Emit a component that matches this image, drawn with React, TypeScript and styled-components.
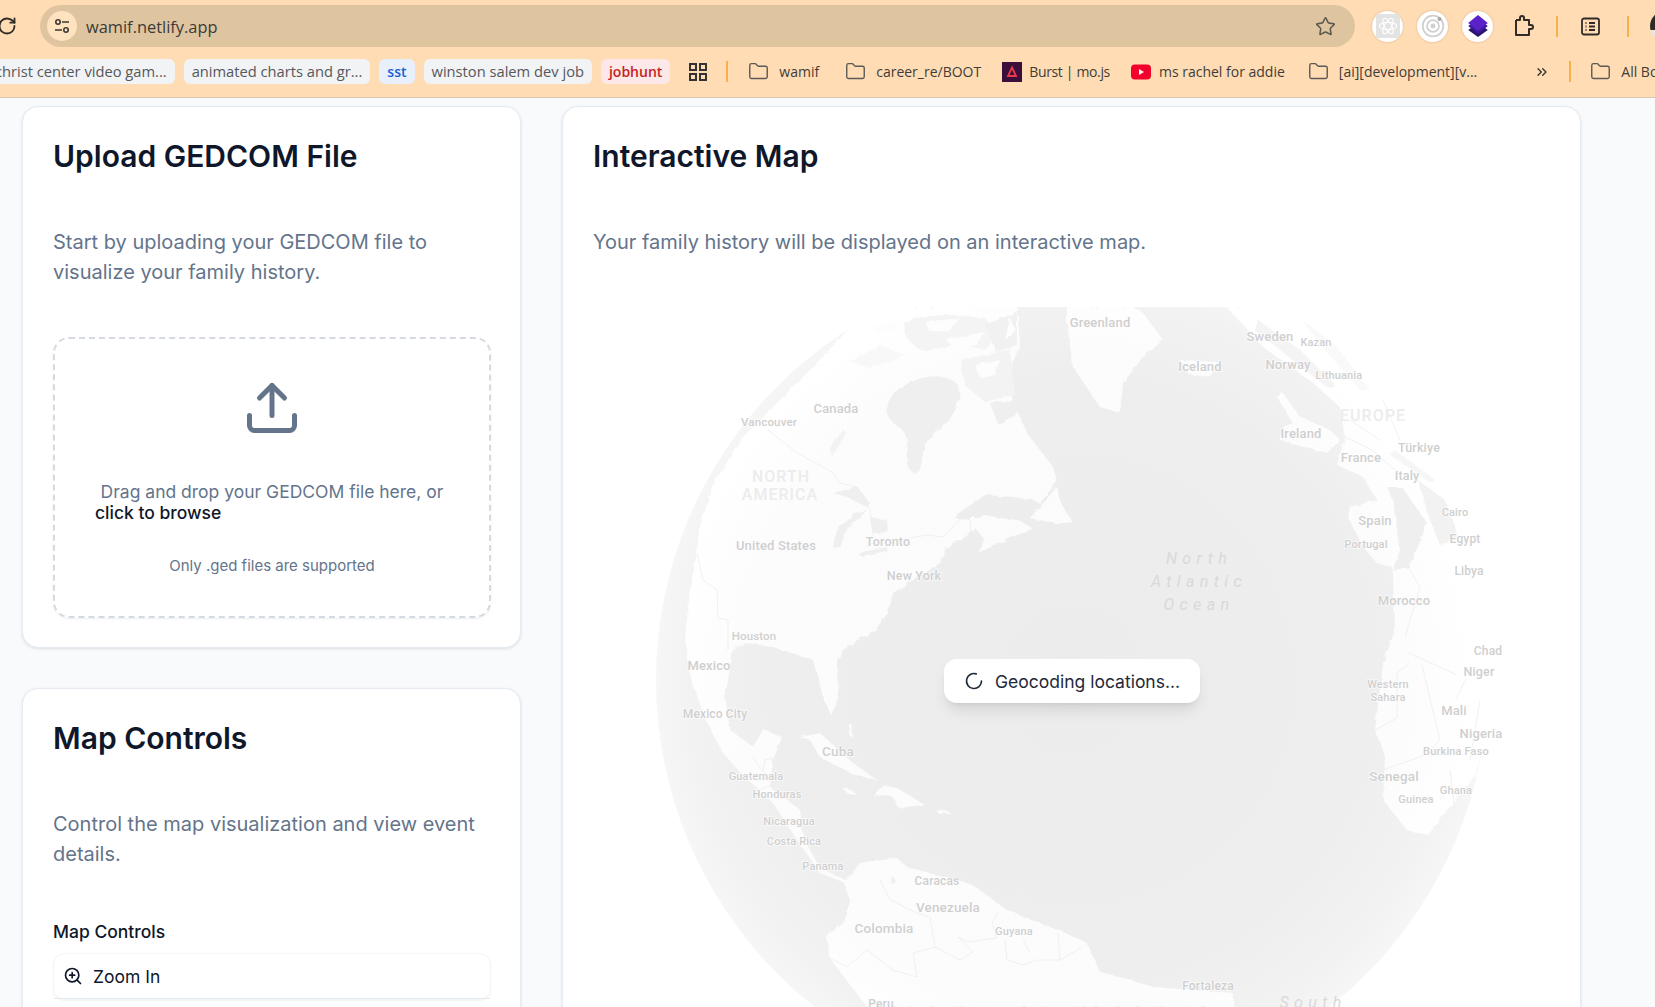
import React from "react";
import styled, { createGlobalStyle } from "styled-components";
import { Upload, ZoomIn, LoaderCircle, Star, RotateCw, Folder, ChevronsRight } from "lucide-react";

const Global = createGlobalStyle`
  html, body { margin: 0; height: 100%; overflow: hidden; background: #f8fafc; }
  body { font-family: Inter, "Liberation Sans", sans-serif; }
  * { box-sizing: border-box; }
`;

const Shell = styled.div`
  width: 1655px;
  height: 1007px;
  overflow: hidden;
  display: flex;
  flex-direction: column;
`;

const Chrome = styled.header`
  height: 98px;
  flex: none;
  background: #ffdcb4;
  border-bottom: 1px solid #d9c6ae;
  font-family: "Open Sans", "Noto Sans", sans-serif;
  overflow: hidden;
`;

const TopRow = styled.div`
  height: 42px;
  margin-top: 5px;
  display: flex;
  align-items: center;
  color: #3a3a3a;
  white-space: nowrap;
`;

const Reload = styled.div`
  width: 40px;
  margin-left: -3px;
  margin-right: 3px;
  flex: none;
  display: flex;
  color: #2f2c28;
`;

const Omnibox = styled.div`
  width: 1315px;
  height: 42px;
  flex: none;
  background: #dec5a0;
  border-radius: 21px;
  display: flex;
  align-items: center;
  padding: 0 19px 0 7px;
`;

const TuneBadge = styled.div`
  width: 30px;
  height: 30px;
  border-radius: 50%;
  background: #ffe3bf;
  display: flex;
  align-items: center;
  justify-content: center;
  flex: none;
`;

const Url = styled.span`
  margin-left: 9px;
  font-size: 16.4px;
  color: #3c3a36;
  flex: 1;
`;

const ExtGroup = styled.div`
  display: flex;
  align-items: center;
  gap: 14px;
  margin-left: 17px;
`;

const ExtCircle = styled.div`
  width: 31px;
  height: 31px;
  border-radius: 50%;
  background: #fff;
  box-shadow: 0 0 2px rgba(120, 90, 50, 0.35);
  display: flex;
  align-items: center;
  justify-content: center;
`;

const ToolIcon = styled.div<{ $ml: number }>`
  margin-left: ${(p) => p.$ml}px;
  display: flex;
  flex: none;
`;

const OrangeBar = styled.span<{ $ml: number; $h?: number }>`
  width: 2px;
  height: ${(p) => p.$h ?? 21}px;
  background: #f8b048;
  margin-left: ${(p) => p.$ml}px;
  flex: none;
`;

const Avatar = styled.div`
  width: 30px;
  height: 30px;
  border-radius: 50%;
  margin-left: 21px;
  flex: none;
  background: linear-gradient(#2f2a28 62%, #e9e6e2 62%);
`;

const BookmarkRow = styled.div`
  height: 25px;
  margin-top: 12px;
  display: flex;
  align-items: center;
  white-space: nowrap;
  font-size: 14px;
  color: #3f3c38;
`;

const Chip = styled.span<{ $tone?: "blue" | "red"; $ml?: number }>`
  height: 25px;
  flex: none;
  display: flex;
  align-items: center;
  padding: 0 8px ${(p) => (p.$tone ? 0 : 2)}px;
  border-radius: 6px;
  margin-left: ${(p) => p.$ml ?? 9}px;
  font-size: ${(p) => (p.$tone ? 14 : 14.7)}px;
  background: ${(p) => (p.$tone === "blue" ? "#e8f0fe" : p.$tone === "red" ? "#fce8e8" : "#f2f3f5")};
  color: ${(p) => (p.$tone === "blue" ? "#1a62d0" : p.$tone === "red" ? "#c5221f" : "#55585c")};
  font-weight: ${(p) => (p.$tone ? 600 : 400)};
`;

const Mark = styled.span<{ $ml: number; $gap: number; $tight?: boolean }>`
  display: flex;
  align-items: center;
  gap: ${(p) => p.$gap}px;
  flex: none;
  margin-left: ${(p) => p.$ml}px;
  letter-spacing: ${(p) => (p.$tight ? "-0.35px" : "normal")};
`;

const GridIcon = styled.span<{ $ml: number }>`
  margin-left: ${(p) => p.$ml}px;
  display: flex;
  flex: none;
`;

const Main = styled.main`
  flex: 1;
  min-height: 0;
  overflow: hidden;
  display: grid;
  grid-template-columns: 499px 1019px;
  column-gap: 41px;
  align-items: start;
  padding: 8px 0 0 22px;
`;

const Column = styled.div`
  display: flex;
  flex-direction: column;
  gap: 40px;
`;

const Card = styled.section`
  background: #fff;
  border: 1px solid #e6ebf1;
  border-radius: 16px;
  box-shadow: 0 1px 3px rgba(30, 41, 59, 0.12);
  padding: 31px 29px 29px 30px;
`;

const Title = styled.h2`
  margin: 0;
  font-size: 30px;
  line-height: 36px;
  font-weight: 600;
  color: #0f172a;
`;

const Description = styled.p`
  margin: 53px 0 0;
  font-size: 20px;
  line-height: 30px;
  color: #64748b;
`;

const Dropzone = styled.div`
  margin-top: 50px;
  height: 281px;
  border: 2px dashed #d5dae2;
  border-radius: 16px;
  box-shadow: 0 1px 2px rgba(30, 41, 59, 0.08);
  padding-top: 39px;
  display: flex;
  flex-direction: column;
  align-items: center;
  color: #64748b;
`;

const DropText = styled.p`
  width: 354px;
  margin: 43px 0 0;
  font-size: 17.5px;
  line-height: 21px;
  text-align: center;
`;

const Browse = styled.span`
  display: block;
  text-align: left;
  color: #0f172a;
  font-weight: 500;
`;

const DropHint = styled.p`
  margin: 33px 0 0;
  font-size: 15px;
  line-height: 20px;
`;

const SectionLabel = styled.h3`
  margin: 49px 0 0;
  font-size: 17.5px;
  line-height: 28px;
  font-weight: 500;
  color: #0f172a;
`;

const Menu = styled.div`
  margin-top: 7px;
  border: 1px solid #f4f6f9;
  border-radius: 12px;
  box-shadow: 0 1px 2px rgba(30, 41, 59, 0.06);
`;

const MenuRow = styled.div`
  height: 45px;
  display: flex;
  align-items: center;
  gap: 10px;
  padding-left: 9px;
  font-size: 17.5px;
  color: #0f172a;
  border-bottom: 1px solid #e2e8f0;
`;

const MapFrame = styled.div`
  position: relative;
  margin-top: 50px;
  height: 748px;
`;

const MapArt = styled.svg`
  display: block;
  width: 958px;
  height: 748px;
`;

const LandPath = styled.path<{ $fill?: string }>`
  fill: ${(p) => p.$fill ?? "url(#landFade)"};
`;

const SeaPath = styled.path<{ $fill?: string }>`
  fill: ${(p) => p.$fill ?? "#efefef"};
`;

const BorderPath = styled.path`
  fill: none;
  stroke: #ebebeb;
  stroke-width: 0.7;
`;

const MapLabel = styled.text<{ $size: number; $kind?: "soft" | "sea" }>`
  font-family: Roboto, "Open Sans", sans-serif;
  font-size: ${(p) => p.$size}px;
  font-weight: ${(p) => (p.$kind === "sea" ? 400 : 500)};
  font-style: ${(p) => (p.$kind === "sea" ? "italic" : "normal")};
  letter-spacing: ${(p) => (p.$kind === "sea" ? "5.4px" : p.$kind === "soft" ? "1px" : "0.15px")};
  fill: ${(p) => (p.$kind === "soft" ? "#ececec" : p.$kind === "sea" ? "#d9d9d9" : "#cfcfcf")};
  stroke: rgba(255, 255, 255, 0.75);
  stroke-width: ${(p) => (p.$kind ? 0 : 1.6)}px;
  paint-order: stroke;
  text-anchor: middle;
  dominant-baseline: central;
`;

const StatusLayer = styled.div`
  position: absolute;
  inset: 0;
  display: flex;
  align-items: center;
  justify-content: center;
`;

const StatusPill = styled.div`
  width: 256px;
  height: 44px;
  background: #fff;
  border-radius: 13px;
  box-shadow: 0 10px 15px -3px rgba(0, 0, 0, 0.1), 0 4px 6px -4px rgba(0, 0, 0, 0.1);
  display: flex;
  align-items: center;
  gap: 11px;
  padding-left: 20px;
  font-size: 17.5px;
  color: #1e293b;
`;

const labels: [string, number, number, number, ("soft" | "sea")?][] = [
  ["Greenland", 1100, 322, 13],
  ["Canada", 836, 408, 13],
  ["Vancouver", 769, 422, 11.5],
  ["NORTH", 781, 476, 16, "soft"],
  ["AMERICA", 780, 494, 16, "soft"],
  ["United States", 776, 545, 13],
  ["Toronto", 888, 541, 12.5],
  ["New York", 914, 575, 12.5],
  ["Houston", 754, 636, 11.5],
  ["Sweden", 1270, 336, 13],
  ["Kazan", 1316, 342, 11],
  ["Iceland", 1200, 366, 13],
  ["Norway", 1288, 364, 13],
  ["Lithuania", 1339, 375, 11],
  ["EUROPE", 1373, 415, 16, "soft"],
  ["Ireland", 1301, 433, 13],
  ["Türkiye", 1419, 447, 12.5],
  ["France", 1361, 457, 13],
  ["Italy", 1407, 475, 12.5],
  ["Cairo", 1455, 512, 11],
  ["Spain", 1375, 520, 13],
  ["Egypt", 1465, 539, 12],
  ["Portugal", 1366, 544, 11],
  ["Libya", 1469, 571, 12],
  ["North", 1199, 558, 16, "sea"],
  ["Atlantic", 1199, 581, 16, "sea"],
  ["Ocean", 1199, 604, 16, "sea"],
  ["Morocco", 1404, 600, 13],
  ["Mexico", 709, 665, 13],
  ["Mexico City", 715, 714, 12],
  ["Cuba", 838, 751, 13.5],
  ["Guatemala", 756, 776, 11],
  ["Honduras", 777, 794, 11],
  ["Nicaragua", 789, 821, 11],
  ["Costa Rica", 794, 841, 11],
  ["Panama", 823, 866, 11],
  ["Caracas", 937, 881, 12],
  ["Venezuela", 948, 907, 13.5],
  ["Colombia", 884, 928, 13.5],
  ["Guyana", 1014, 931, 11],
  ["Peru", 881, 1004, 12],
  ["Chad", 1488, 651, 12],
  ["Niger", 1479, 671, 12.5],
  ["Western", 1388, 684, 11],
  ["Sahara", 1388, 697, 11],
  ["Mali", 1454, 710, 13],
  ["Nigeria", 1481, 733, 13],
  ["Burkina Faso", 1456, 751, 11],
  ["Senegal", 1394, 776, 13.5],
  ["Ghana", 1456, 790, 11],
  ["Guinea", 1416, 799, 11],
  ["Fortaleza", 1208, 986, 12],
  ["South", 1313, 1002, 16, "sea"],
];

const land = [
  "M845 333L805 375L773 407L740 440L712 487L699 530L697 553L690 590L685 640L692 683L707 723L723 753L747 780L773 803L797 840L820 873L843 882L850 900L842 925L827 933L829 957L867 1007L1235 1007L1233 993L1153 987L1120 977L1100 972L1087 943L1063 932L1007 910L973 885L907 867L897 858L860 863L846 880L820 868L803 837L800 810L770 787L773 760L782 737L763 730L753 747L730 730L725 697L733 650L745 643L773 647L813 660L823 697L832 717L838 697L837 660L847 647L875 630L888 613L893 593L940 563L945 550L975 528L985 540L978 553L1017 535L1032 528L1018 520L1000 518L985 515L962 520L953 517L985 495L1013 497L1033 500L1040 503L1057 482L1053 467L1027 433L1017 410L1005 380L1020 345L1017 307L875 307Z",
  "M1067 307L1067 323L1073 367L1100 407L1120 413L1123 383L1143 357L1163 340L1143 313L1133 307Z",
  "M1030 518L1057 487L1062 505L1073 523L1053 523Z",
  "M1180 360L1220 362L1210 376L1190 375Z",
  "M1277 397L1283 393L1300 417L1330 430L1340 440L1327 453L1303 447L1280 440L1280 428L1293 423Z",
  "M1227 307L1263 347L1313 383L1340 407L1345 437L1337 465L1363 477L1377 500L1350 507L1348 517L1363 547L1377 563L1392 567L1393 573L1395 630L1383 663L1375 730L1385 757L1383 800L1407 830L1428 835L1450 807L1476 773L1500 680L1500 500L1400 340L1300 307Z",
  "M800 737L820 733L853 763L877 780L850 773L820 757L810 740Z",
  "M883 785L897 788L925 805L898 808L893 797L873 795Z",
  "M842 788L850 789L857 795L848 794Z",
  "M937 810L950 812L950 814L938 813Z",
  "M849 724L852 724L853 737L850 736Z",
];

const seas: [string, string?][] = [
  ["M887 413Q886 398 900 388Q925 372 948 378Q964 384 958 402Q952 422 935 433Q926 438 923 452Q922 470 916 474Q905 470 907 452Q910 436 900 428Q890 422 887 413Z"],
  ["M990 403L1017 400L1017 415L998 424Z"],
  ["M905 322Q945 310 985 318Q1000 335 985 350Q950 340 925 352Q900 340 905 322Z", "#f4f4f4"],
  ["M960 360L1010 350L1015 395L985 402L965 385Z", "#f3f3f3"],
  ["M850 362L880 345L905 355L870 368Z", "#f8f8f8"],
  ["M985 325L1017 312L1017 345L996 352Z", "#f1f1f1"],
  ["M833 493L857 487L870 503L867 507L847 497Z"],
  ["M833 547L837 530L857 512L867 510L847 530L840 547Z"],
  ["M870 517L887 520L888 532L873 533Z"],
  ["M857 553L887 547L887 552L863 557Z"],
  ["M830 447L843 430L847 433L832 457Z", "#f3f3f3"],
  ["M1258 320L1300 350L1335 385L1328 388L1290 358L1255 330Z", "#f4f4f4"],
  ["M1300 318L1335 345L1370 390L1362 392L1325 350Z", "#f9f9f9"],
  ["M1387 487L1402 487L1427 523L1410 567L1393 570L1400 550L1393 500Z"],
  ["M1418 480L1445 500L1458 535L1440 545L1428 515Z", "#f2f2f2"],
  ["M1395 450L1435 480L1430 482L1390 455Z", "#f6f6f6"],
  ["M892 875L897 882L891 884Z"],
];

const streaks = [
  "M925 322L960 318L950 330L930 332Z",
  "M945 340L985 332L975 345L955 348Z",
  "M975 365L1000 360L995 375L980 378Z",
  "M870 328L905 318L900 328L880 335Z",
  "M1010 318L1016 330L1005 340Z",
];

const borders = [
  "M768 430L797 453L832 472L840 483L857 487L870 510L873 533L867 547",
  "M910 538L927 535L943 537L962 517L970 520L972 540",
  "M697 553L703 580L717 590L718 618L728 620L728 650",
  "M753 757L763 772L765 760L773 758M747 780L760 790L772 785",
  "M1407 652L1457 675M1422 665L1440 740L1425 755L1383 770M1397 673L1397 718L1375 730M1410 663L1397 673",
  "M1410 570L1420 587L1405 637",
  "M880 880L890 900L917 913L930 917L935 947L960 960L973 952L958 937L967 942L997 938L992 923L998 912",
  "M1005 940L1007 960L1023 965L1037 960L1060 960L1083 947M1023 940L1030 953M1058 933L1060 960",
  "M828 957L847 967L867 950L893 970L917 977L913 953L935 947",
  "M1456 700L1465 680M1470 760L1480 700M1440 800L1445 790M1450 770L1455 810",
  "M1345 437L1372 450L1395 470M1350 420L1380 440M1383 400L1400 440",
];

const Tune = () => (
  <svg width="18" height="18" viewBox="0 0 18 18" fill="none" stroke="#3c3a36" strokeWidth="1.6">
    <circle cx="5" cy="5" r="2.2" />
    <path d="M9 5h7M2 13h7" />
    <circle cx="13" cy="13" r="2.2" />
  </svg>
);

const ReactExt = () => (
  <svg width="24" height="24" viewBox="0 0 22 22">
    <rect width="22" height="22" rx="2" fill="#e3e3e3" />
    <g fill="none" stroke="#fff" strokeWidth="1">
      <ellipse cx="11" cy="11" rx="8" ry="3.2" />
      <ellipse cx="11" cy="11" rx="8" ry="3.2" transform="rotate(60 11 11)" />
      <ellipse cx="11" cy="11" rx="8" ry="3.2" transform="rotate(120 11 11)" />
    </g>
  </svg>
);

const TargetExt = () => (
  <svg width="26" height="26" viewBox="0 0 24 24" fill="none" stroke="#cfcfcf">
    <circle cx="12" cy="12" r="9.5" strokeWidth="1.6" />
    <circle cx="12" cy="12" r="5.5" strokeWidth="1.6" />
    <circle cx="12" cy="12" r="1.8" fill="#cfcfcf" />
    <circle cx="18" cy="5.5" r="1.8" fill="#a8a8a8" stroke="none" />
  </svg>
);

const StackExt = () => (
  <svg width="24" height="24" viewBox="0 0 22 24" preserveAspectRatio="none">
    <path d="M11 9L20 16L11 23L2 16Z" fill="#2a1470" />
    <path d="M11 5L20 12L11 20L2 12Z" fill="#3c1a9c" />
    <path d="M11 1L20 9L11 17L2 9Z" fill="#5a22c8" />
  </svg>
);

const PuzzleIcon = () => (
  <svg width="22" height="24" viewBox="0 0 22 24" fill="none" stroke="#2f2c28" strokeWidth="2" strokeLinejoin="round">
    <path d="M3 6h4V4a2 2 0 0 1 4 0v2h5v5h2a2 2 0 0 1 0 4h-2v6H3v-5" />
    <path d="M3 6v10" />
  </svg>
);

const ListPanel = () => (
  <svg width="19" height="19" viewBox="0 0 19 19" fill="none" stroke="#2f2c28" strokeWidth="1.8">
    <rect x="1" y="1.5" width="17" height="16" rx="2" />
    <path d="M8 6h6M8 9.5h6M8 13h6M4.5 6h1M4.5 9.5h1M4.5 13h1" />
  </svg>
);

const Apps = () => (
  <svg width="18" height="18" viewBox="0 0 18 18" fill="none" stroke="#333" strokeWidth="2">
    <rect x="1" y="1" width="6" height="6" />
    <rect x="11" y="1" width="6" height="6" />
    <rect x="1" y="11" width="6" height="6" />
    <rect x="11" y="11" width="6" height="6" />
  </svg>
);

const BurstIcon = () => (
  <svg width="20" height="20" viewBox="0 0 20 20">
    <rect width="20" height="20" fill="#3a0f3c" />
    <path d="M10 5.5L14 14H6Z" fill="none" stroke="#f0384b" strokeWidth="1.8" />
  </svg>
);

const YouTubeIcon = () => (
  <svg width="20" height="20" viewBox="0 0 20 20">
    <rect y="2.5" width="20" height="15" rx="4" fill="#f5002c" />
    <path d="M8 7l5 3-5 3Z" fill="#fff" />
  </svg>
);

const Bookmark = ({
  ml,
  label,
  icon,
  gap = 10,
  tight,
}: {
  ml: number;
  label: string;
  icon?: React.ReactNode;
  gap?: number;
  tight?: boolean;
}) => (
  <Mark $ml={ml} $gap={gap} $tight={tight}>
    {icon ?? <Folder size={21} strokeWidth={1.6} color="#5c5a56" />}
    {label}
  </Mark>
);

export default function App() {
  return (
    <Shell>
      <Global />
      <Chrome>
        <TopRow>
          <Reload>
            <RotateCw size={20} strokeWidth={2.2} />
          </Reload>
          <Omnibox>
            <TuneBadge>
              <Tune />
            </TuneBadge>
            <Url>wamif.netlify.app</Url>
            <Star size={21} strokeWidth={1.8} color="#5f5a50" />
          </Omnibox>
          <ExtGroup>
            <ExtCircle>
              <ReactExt />
            </ExtCircle>
            <ExtCircle>
              <TargetExt />
            </ExtCircle>
            <ExtCircle>
              <StackExt />
            </ExtCircle>
          </ExtGroup>
          <ToolIcon $ml={20}>
            <PuzzleIcon />
          </ToolIcon>
          <OrangeBar $ml={21} />
          <ToolIcon $ml={23}>
            <ListPanel />
          </ToolIcon>
          <OrangeBar $ml={27} />
          <Avatar />
        </TopRow>
        <BookmarkRow>
          <Chip $ml={-13}>christ center video gam...</Chip>
          <Chip>animated charts and gr...</Chip>
          <Chip $tone="blue">sst</Chip>
          <Chip>winston salem dev job</Chip>
          <Chip $tone="red">jobhunt</Chip>
          <GridIcon $ml={19}>
            <Apps />
          </GridIcon>
          <OrangeBar $ml={19} />
          <Bookmark ml={20} label="wamif" />
          <Bookmark ml={26} label="career_re/BOOT" />
          <Bookmark ml={21} label="Burst | mo.js" icon={<BurstIcon />} gap={7} tight />
          <Bookmark ml={21} label="ms rachel for addie" icon={<YouTubeIcon />} gap={8} />
          <Bookmark ml={23} label="[ai][development][v..." />
          <GridIcon $ml={57}>
            <ChevronsRight size={16} strokeWidth={2} color="#333" />
          </GridIcon>
          <OrangeBar $ml={19} />
          <Bookmark ml={19} label="All Bookmarks" />
        </BookmarkRow>
      </Chrome>
      <Main>
        <Column>
          <Card>
            <Title>Upload GEDCOM File</Title>
            <Description>Start by uploading your GEDCOM file to visualize your family history.</Description>
            <Dropzone>
              <Upload size={60} strokeWidth={2} color="#64748b" />
              <DropText>
                Drag and drop your GEDCOM file here, or
                <Browse>click to browse</Browse>
              </DropText>
              <DropHint>Only .ged files are supported</DropHint>
            </Dropzone>
          </Card>
          <Card>
            <Title>Map Controls</Title>
            <Description>Control the map visualization and view event details.</Description>
            <SectionLabel>Map Controls</SectionLabel>
            <Menu>
              <MenuRow>
                <ZoomIn size={20} strokeWidth={2} />
                Zoom In
              </MenuRow>
            </Menu>
          </Card>
        </Column>
        <Card>
          <Title>Interactive Map</Title>
          <Description>Your family history will be displayed on an interactive map.</Description>
          <MapFrame>
            <MapArt viewBox="593 307 958 748">
              <defs>
                <radialGradient id="ocean" cx="1072" cy="680" r="416" gradientUnits="userSpaceOnUse">
                  <stop offset="0" stopColor="#ececec" />
                  <stop offset="0.72" stopColor="#eeeeee" />
                  <stop offset="0.92" stopColor="#f2f2f2" />
                  <stop offset="1" stopColor="#f6f6f6" />
                </radialGradient>
                <radialGradient id="landFade" cx="1072" cy="680" r="416" gradientUnits="userSpaceOnUse">
                  <stop offset="0" stopColor="#fbfbfb" />
                  <stop offset="0.8" stopColor="#fcfcfc" />
                  <stop offset="0.97" stopColor="#ffffff" />
                </radialGradient>
                <filter id="rough" x="-5%" y="-5%" width="110%" height="110%">
                  <feTurbulence type="fractalNoise" baseFrequency="0.14" numOctaves="3" seed="4" />
                  <feDisplacementMap in="SourceGraphic" scale="4" />
                </filter>
              </defs>
              <circle cx="1072" cy="680" r="416" fill="url(#ocean)" />
              <g filter="url(#rough)">
                {land.map((d) => (
                  <LandPath key={d} d={d} />
                ))}
                {seas.map(([d, fill]) => (
                  <SeaPath key={d} d={d} $fill={fill} />
                ))}
                {streaks.map((d) => (
                  <LandPath key={d} d={d} $fill="#fdfdfd" />
                ))}
              </g>
              {borders.map((d) => (
                <BorderPath key={d} d={d} />
              ))}
              {labels.map(([text, x, y, size, kind]) => (
                <MapLabel key={text} x={x} y={y} $size={size} $kind={kind}>
                  {text}
                </MapLabel>
              ))}
            </MapArt>
            <StatusLayer>
              <StatusPill>
                <LoaderCircle size={20} strokeWidth={2} />
                Geocoding locations...
              </StatusPill>
            </StatusLayer>
          </MapFrame>
        </Card>
      </Main>
    </Shell>
  );
}
